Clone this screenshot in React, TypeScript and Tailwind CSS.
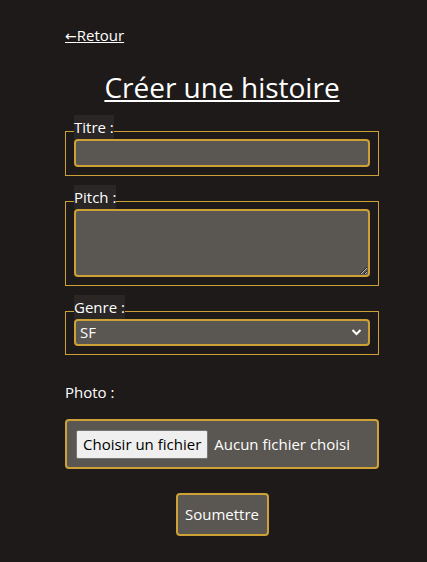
import React from "react";

const gold = "border-[#cda136]";

function Legend({ children }: { children: React.ReactNode }) {
  return (
    <legend className="pb-[8px] -mb-[8px]">
      <span className="inline-block bg-[#2a2625] leading-[24px] text-[15px] align-top">{children}</span>
    </legend>
  );
}

export default function App() {
  return (
    <div className="min-h-[562px] w-full bg-[#1e1a19] text-white font-['Open_Sans',sans-serif] text-[15px]">
      <div className="ml-[65px] w-[314px] pt-[23px]">
        <a href="#" className="underline text-[15px] leading-[24px] h-[24px] block w-fit">
          <span className="font-['DejaVu_Sans',sans-serif] text-[14px] leading-none">←</span>Retour
        </a>
        <h1 className="text-center text-[28px] leading-[42px] underline mt-[19px] mb-[7px]">
          Créer une histoire
        </h1>
        <form className="flex flex-col">
          <fieldset className={`border ${gold} px-2 pb-[8px]`}>
            <Legend>Titre :</Legend>
            <input
              type="text"
              className={`block w-full h-[28px] bg-[#5a5651] border-2 ${gold} rounded-[4px] outline-none px-1 text-white`}
            />
          </fieldset>
          <fieldset className={`border ${gold} px-2 pb-[8px] mt-[9px]`}>
            <Legend>Pitch :</Legend>
            <textarea
              className={`block w-full h-[68px] bg-[#5a5651] border-2 ${gold} rounded-[4px] outline-none px-1 text-white [color-scheme:dark]`}
            />
          </fieldset>
          <fieldset className={`border ${gold} px-2 pb-[8px] mt-[9px]`}>
            <Legend>Genre :</Legend>
            <div className="relative">
              <select
                defaultValue="SF"
                className={`block w-full h-[27px] appearance-none bg-[#5a5651] border-2 ${gold} rounded-[4px] outline-none pl-[4px] text-white text-[15px]`}
              >
                <option>SF</option>
                <option>Fantasy</option>
                <option>Policier</option>
              </select>
              <svg
                className="absolute right-[8px] top-[9px] pointer-events-none"
                width="11"
                height="8"
                viewBox="0 0 11 8"
              >
                <path d="M1.5 2 L5.5 6 L9.5 2" stroke="white" strokeWidth="2" fill="none" />
              </svg>
            </div>
          </fieldset>
          <label className="mt-[25px] leading-[24px]">Photo :</label>
          <label
            className={`mt-[15px] h-[50px] flex items-center gap-[6px] bg-[#5a5651] border-2 ${gold} rounded-[4px] pl-[9px] cursor-pointer`}
          >
            <input type="file" className="hidden" />
            <span className="bg-[#efefef] text-black border border-[#767676] rounded-[2px] h-[29px] px-[6px] flex items-center leading-none">
              Choisir un fichier
            </span>
            <span>Aucun fichier choisi</span>
          </label>
          <div className="flex justify-center mt-[24px]">
            <button
              type="button"
              className={`w-[93px] h-[43px] bg-[#5a5651] border-2 ${gold} rounded-[4px] text-white`}
            >
              Soumettre
            </button>
          </div>
        </form>
      </div>
    </div>
  );
}
